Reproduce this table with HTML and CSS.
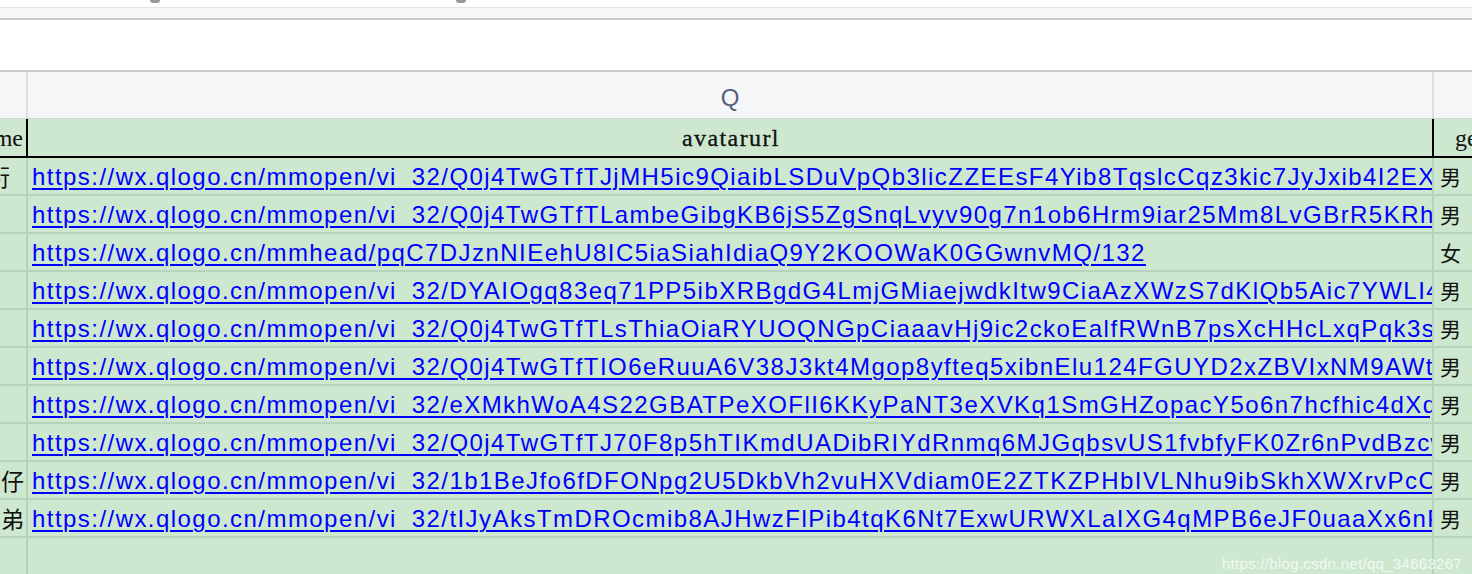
FILE: index.html
```html
<!DOCTYPE html>
<html lang="zh">
<head>
<meta charset="utf-8">
<title>avatarurl</title>
<link rel="stylesheet" href="styles.css">
</head>
<body>
<div class="page">
  <div class="top">
    <span class="frag frag-a"></span>
    <span class="frag frag-b"></span>
  </div>
  <div class="toolbar"></div>
  <div class="formula"></div>
  <div class="colhead">
    <div class="ch ch-a"></div>
    <div class="ch ch-b">Q</div>
    <div class="ch ch-c"></div>
  </div>
  <div class="sheet">
    <div class="row head">
      <div class="c a"><span>nickname</span></div>
      <div class="c b">avatarurl</div>
      <div class="c g">gender</div>
    </div>
    <div class="row">
      <div class="c a"><span class="shift">衍</span></div>
      <div class="c b"><a href="#">https://wx.qlogo.cn/mmopen/vi_32/Q0j4TwGTfTJjMH5ic9QiaibLSDuVpQb3licZZEEsF4Yib8TqslcCqz3kic7JyJxib4I2EXcdq1ia/132</a></div>
      <div class="c g">男</div>
    </div>
    <div class="row">
      <div class="c a"><span></span></div>
      <div class="c b"><a href="#">https://wx.qlogo.cn/mmopen/vi_32/Q0j4TwGTfTLambeGibgKB6jS5ZgSnqLvyv90g7n1ob6Hrm9iar25Mm8LvGBrR5KRhqw/132</a></div>
      <div class="c g">男</div>
    </div>
    <div class="row">
      <div class="c a"><span></span></div>
      <div class="c b"><a href="#">https://wx.qlogo.cn/mmhead/pqC7DJznNIEehU8IC5iaSiahIdiaQ9Y2KOOWaK0GGwnvMQ/132</a></div>
      <div class="c g">女</div>
    </div>
    <div class="row">
      <div class="c a"><span></span></div>
      <div class="c b"><a href="#">https://wx.qlogo.cn/mmopen/vi_32/DYAIOgq83eq71PP5ibXRBgdG4LmjGMiaejwdkItw9CiaAzXWzS7dKlQb5Aic7YWLI4dw/132</a></div>
      <div class="c g">男</div>
    </div>
    <div class="row">
      <div class="c a"><span></span></div>
      <div class="c b"><a href="#">https://wx.qlogo.cn/mmopen/vi_32/Q0j4TwGTfTLsThiaOiaRYUOQNGpCiaaavHj9ic2ckoEalfRWnB7psXcHHcLxqPqk3sZw/132</a></div>
      <div class="c g">男</div>
    </div>
    <div class="row">
      <div class="c a"><span></span></div>
      <div class="c b"><a href="#">https://wx.qlogo.cn/mmopen/vi_32/Q0j4TwGTfTIO6eRuuA6V38J3kt4Mgop8yfteq5xibnElu124FGUYD2xZBVIxNM9AWtq/132</a></div>
      <div class="c g">男</div>
    </div>
    <div class="row">
      <div class="c a"><span></span></div>
      <div class="c b"><a href="#">https://wx.qlogo.cn/mmopen/vi_32/eXMkhWoA4S22GBATPeXOFlI6KKyPaNT3eXVKq1SmGHZopacY5o6n7hcfhic4dXqw/132</a></div>
      <div class="c g">男</div>
    </div>
    <div class="row">
      <div class="c a"><span></span></div>
      <div class="c b"><a href="#">https://wx.qlogo.cn/mmopen/vi_32/Q0j4TwGTfTJ70F8p5hTIKmdUADibRIYdRnmq6MJGqbsvUS1fvbfyFK0Zr6nPvdBzcw/132</a></div>
      <div class="c g">男</div>
    </div>
    <div class="row">
      <div class="c a"><span>仔</span></div>
      <div class="c b"><a href="#">https://wx.qlogo.cn/mmopen/vi_32/1b1BeJfo6fDFONpg2U5DkbVh2vuHXVdiam0E2ZTKZPHbIVLNhu9ibSkhXWXrvPcOw/132</a></div>
      <div class="c g">男</div>
    </div>
    <div class="row">
      <div class="c a"><span>弟</span></div>
      <div class="c b"><a href="#">https://wx.qlogo.cn/mmopen/vi_32/tIJyAksTmDROcmib8AJHwzFlPib4tqK6Nt7ExwURWXLaIXG4qMPB6eJF0uaaXx6nPw/132</a></div>
      <div class="c g">男</div>
    </div>
    <div class="row last">
      <div class="c a"></div>
      <div class="c b"></div>
      <div class="c g"></div>
    </div>
    <div class="watermark">https://blog.csdn.net/qq_34663267</div>
  </div>
</div>
</body>
</html>
```

FILE: styles.css
```css
* { box-sizing: border-box; }
html, body { margin: 0; padding: 0; }
body {
  width: 1472px;
  height: 574px;
  overflow: hidden;
  background: #ffffff;
  font-family: "Liberation Sans", Arial, sans-serif;
}
.page { width: 1472px; height: 574px; overflow: hidden; }

.top {
  height: 7px;
  display: flex;
  align-items: flex-start;
  padding-left: 150px;
}
.frag {
  display: block;
  width: 10px;
  height: 3px;
  background: #9a9a9c;
  border-radius: 0 0 5px 5px;
}
.frag-b { margin-left: 296px; }

.toolbar {
  height: 13px;
  background: #f5f6f8;
  border-top: 1px solid #e3e3e8;
  border-bottom: 2px solid #c9c9cd;
}
.formula { height: 50px; background: #ffffff; }

.colhead {
  height: 49px;
  display: grid;
  grid-template-columns: 26px 1406px 1fr;
  background: #f5f6f8;
  border-top: 2px solid #c9c9cd;
  border-bottom: 1px solid #d6d6d8;
}
.ch { height: 100%; }
.ch-b, .ch-c { border-left: 2px solid #dfdfe2; }
.ch-b {
  display: flex;
  align-items: center;
  justify-content: center;
  padding-top: 5px;
  font-size: 24px;
  color: #56607a;
  font-family: "Liberation Sans", Arial, sans-serif;
}

.sheet { position: relative; background: #cde8cf; }
.row {
  display: grid;
  grid-template-columns: 26px 1406px 1fr;
  height: 38px;
  border-bottom: 2px solid #b8d3bb;
}
.row.head {
  height: 39px;
  border-bottom: 2px solid #000000;
}
.row.last { border-bottom: none; height: 40px; }

.c {
  overflow: hidden;
  white-space: nowrap;
  height: 100%;
}
.c.b, .c.g { border-left: 2px solid #b8d3bb; }
.row.head .c.b, .row.head .c.g { border-left-color: #000000; }

.c.a {
  display: flex;
  justify-content: flex-end;
  font-family: "Noto Sans CJK SC", sans-serif;
  font-size: 23px;
  line-height: 36px;
  color: #111111;
  padding-right: 2px;
}
.c.a .shift { padding-right: 14px; }

.row.head .c {
  font-family: "Liberation Serif", "Times New Roman", serif;
  font-size: 24px;
  line-height: 37px;
  color: #111111;
  padding-top: 1px;
}
.row.head .c.a { padding-right: 3px; }
.row.head .c.b {
  text-align: center;
  letter-spacing: 1.4px;
  padding-left: 2px;
  -webkit-text-stroke: 0.3px #111111;
}
.row.head .c.g { padding-left: 21px; }

.c.b { padding-left: 4px; line-height: 36px; padding-top: 1px; }
.c.b a {
  color: #0000ff;
  font-family: "Liberation Sans", Arial, sans-serif;
  font-size: 24px;
  letter-spacing: 1.45px;
  text-decoration: underline;
  text-decoration-thickness: 2px;
  text-underline-offset: 3px;
}

.c.g {
  font-family: "Noto Sans CJK SC", sans-serif;
  font-size: 21px;
  line-height: 36px;
  color: #111111;
  padding-left: 6px;
}

.watermark {
  position: absolute;
  right: 10px;
  bottom: 6px;
  font-family: "Liberation Sans", Arial, sans-serif;
  font-size: 15px;
  color: rgba(255, 255, 255, 0.75);
  letter-spacing: 0.3px;
}
```
